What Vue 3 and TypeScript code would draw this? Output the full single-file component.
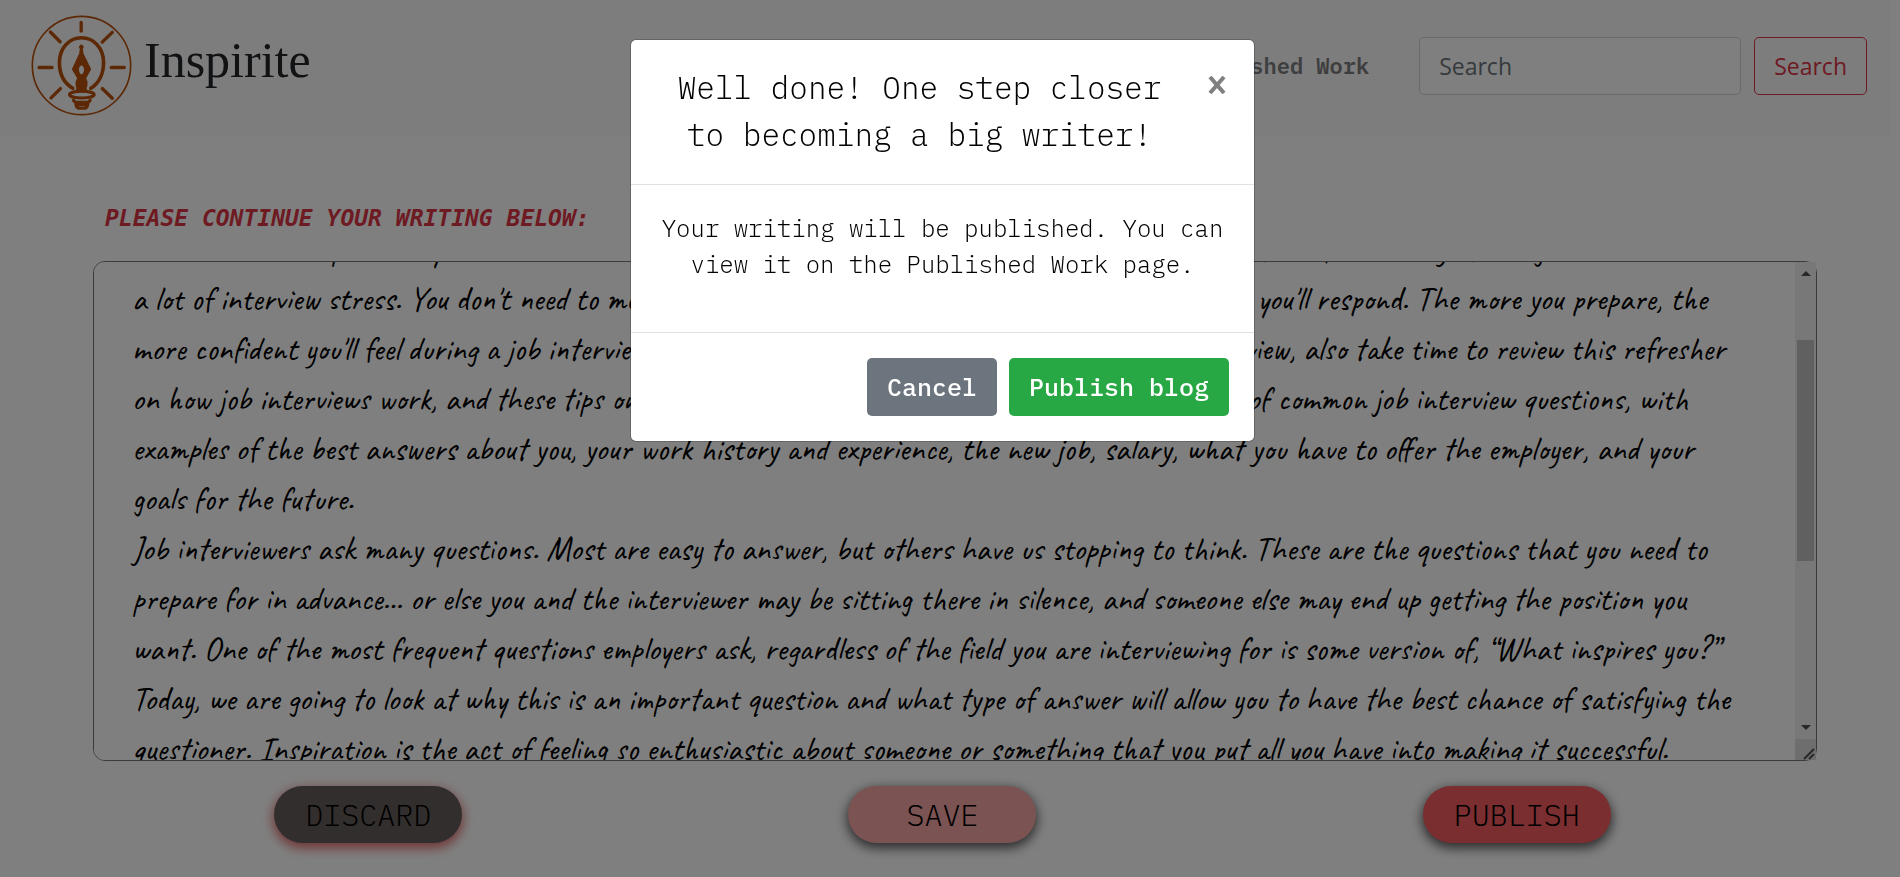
<script setup lang="ts">
import { computed, nextTick, onMounted, ref } from 'vue'

const editor = ref<HTMLTextAreaElement | null>(null)
const query = ref('')
const showDialog = ref(true)

const scrollTop = ref(0)
const scrollHeight = ref(1)
const viewHeight = ref(1)

const thumbStyle = computed(() => ({
  top: `${(scrollTop.value / scrollHeight.value) * 100}%`,
  height: `${(viewHeight.value / scrollHeight.value) * 100}%`,
}))

function syncScroll() {
  const el = editor.value
  if (!el) return
  scrollTop.value = el.scrollTop
  scrollHeight.value = el.scrollHeight
  viewHeight.value = el.clientHeight
}

const draft = ref(
  [
    'Are you ready to ace your upcoming job interview? An important part of interview preparation is being ready to respond to the',
    'with a little more practice you can become more confident at each interview and also learn how to be free of the worry of being in',
    "a lot of interview stress. You don't need to memorize an answer, but do take the time to consider how you'll respond. The more you prepare, the",
    "more confident you'll feel during a job interview. When you're not sure what to expect during an interview, also take time to review this refresher",
    'on how job interviews work, and these tips on how to ace the interview. Then take a look at this list of common job interview questions, with',
    'examples of the best answers about you, your work history and experience, the new job, salary, what you have to offer the employer, and your',
    'goals for the future.',
    'Job interviewers ask many questions. Most are easy to answer, but others have us stopping to think. These are the questions that you need to',
    'prepare for in advance... or else you and the interviewer may be sitting there in silence, and someone else may end up getting the position you',
    'want. One of the most frequent questions employers ask, regardless of the field you are interviewing for is some version of, “What inspires you?”',
    'Today, we are going to look at why this is an important question and what type of answer will allow you to have the best chance of satisfying the',
    'questioner. Inspiration is the act of feeling so enthusiastic about someone or something that you put all you have into making it successful.',
    'Employers ask the question because they want to know what motivates you, and whether the role will keep you interested.',
    'Think about the moments when you felt proud of your work, and the people who helped you to get there.',
    'Choose one example that relates to the position, and explain how it changed the way that you work.',
    'Keep the answer short and honest, and practice it aloud until it sounds natural.',
    'Finish by linking your inspiration to the goals of the company.',
    'Good luck with your next interview!',
  ].join('\n'),
)

onMounted(async () => {
  await nextTick()
  if (editor.value) editor.value.scrollTop = 128
  syncScroll()
})
</script>

<template>
  <div class="page">
    <header class="navbar">
      <a class="brand" href="#">
        <svg class="logo" viewBox="48 30 300 302" fill="none" stroke="#b8510a" stroke-linecap="round" aria-hidden="true">
          <circle cx="198" cy="181" r="147" stroke-width="5" />
          <path
            stroke-width="10"
            d="M197 52V78M105 81L134 110M290 82L260 111M71 187H110M287 187H326M107 278L135 250M260 250L290 279"
          />
          <path stroke-width="11" d="M172 249C146 234 132 205 132 172C132 130 160 98 198 98C236 98 264 130 264 172C264 205 250 234 226 249" />
          <path
            fill="#b8510a"
            fill-rule="evenodd"
            stroke="none"
            d="M193 131A7 7 0 1 1 202 131L204 145L227 192L212 219Q220 234 213 248L217 262H179L183 248Q176 234 185 219L169 192L191 145ZM198 180C188 184 188 202 198 208C208 202 208 184 198 180Z"
          />
          <ellipse cx="199" cy="268" rx="37" ry="10" stroke-width="9" />
          <path stroke-width="9" d="M174 284Q175 291 187 291H211Q223 291 224 284M181 296Q182 309 192 309H206Q216 309 217 296Q199 301 181 296" />
        </svg>
        <span>Inspirite</span>
      </a>
      <nav class="links"><a href="#">Published Work</a></nav>
      <form class="search" role="search" @submit.prevent>
        <input v-model="query" type="search" placeholder="Search" aria-label="Search" />
        <button type="submit">Search</button>
      </form>
    </header>

    <main class="content">
      <label class="prompt" for="draft">PLEASE CONTINUE YOUR WRITING BELOW:</label>
      <div class="editor">
        <textarea id="draft" ref="editor" v-model="draft" wrap="off" spellcheck="false" @scroll="syncScroll"></textarea>
        <div class="scrollbar" aria-hidden="true">
          <svg class="arrow" viewBox="0 0 21 21"><path d="M6 14L11 9L16 14Z" fill="#505050" /></svg>
          <div class="track"><div class="thumb" :style="thumbStyle"></div></div>
          <svg class="arrow" viewBox="0 0 21 21"><path d="M6 7L11 12L16 7Z" fill="#505050" /></svg>
          <svg class="grip" viewBox="0 0 21 21"><path d="M9 20L19 10M14 20L19 15" stroke="#505050" stroke-width="2" /></svg>
        </div>
      </div>
      <div class="actions">
        <div><button class="discard" type="button">DISCARD</button></div>
        <div><button class="save" type="button">SAVE</button></div>
        <div><button class="publish" type="button" @click="showDialog = true">PUBLISH</button></div>
      </div>
    </main>

    <div v-if="showDialog" class="backdrop">
      <section class="dialog" role="dialog" aria-modal="true" aria-labelledby="dialog-title">
        <div class="dialog-head">
          <h2 id="dialog-title">Well done! One step closer to becoming a big writer!</h2>
          <button class="close" type="button" aria-label="Close" @click="showDialog = false">
            <svg viewBox="0 0 18 18" aria-hidden="true"><path d="M2 1L16 17M16 1L2 17" stroke="#7f7f7f" stroke-width="4" /></svg>
          </button>
        </div>
        <div class="dialog-body">
          <p>Your writing will be published. You can view it on the Published Work page.</p>
        </div>
        <div class="dialog-foot">
          <button class="cancel" type="button" @click="showDialog = false">Cancel</button>
          <button class="confirm" type="button">Publish blog</button>
        </div>
      </section>
    </div>
  </div>
</template>

<style>
body {
  margin: 0;
  background: #fff;
}
</style>

<style scoped>
* {
  box-sizing: border-box;
}

.page {
  min-height: 100vh;
  padding-right: 15px;
  font-family: "IBM Plex Mono", "Liberation Mono", monospace;
  color: #000;
}

.navbar {
  display: flex;
  align-items: center;
  height: 136px;
  margin-right: -6px;
  padding: 0 24px 5px 31px;
  background: #fbfbfc;
}

.brand {
  display: flex;
  align-items: center;
  gap: 12px;
  margin-right: auto;
  font: 50px/60px "Liberation Serif", serif;
  color: #212529;
  text-decoration: none;
}

.brand span {
  padding-bottom: 12px;
}

.logo {
  width: 101px;
  height: 101px;
}

.links {
  padding: 0 50px;
  font-size: 22px;
  font-weight: 600;
}

.links a {
  color: #7c7d7d;
  text-decoration: none;
}

.search {
  display: flex;
  align-items: center;
  gap: 13px;
}

.search input,
.search button {
  height: 58px;
  padding: 0 19px;
  border-radius: 5px;
  font: 23px/36px "Open Sans", sans-serif;
}

.search input {
  width: 322px;
  border: 1px solid #ced4da;
  background: #fff;
}

.search input::placeholder {
  color: #6c757d;
  opacity: 1;
}

.search button {
  border: 1px solid #dc3545;
  background: transparent;
  color: #dc3545;
}

.content {
  padding: 0 81px;
}

.prompt {
  display: block;
  padding: 67px 0 28px 24px;
  font: italic 700 23px/30px "DejaVu Sans Mono", monospace;
  color: #dc3545;
}

.editor {
  position: relative;
  height: 500px;
  margin: 0 -13px 0 12px;
}

.editor textarea {
  display: block;
  width: 100%;
  height: 100%;
  padding: 40px 38px;
  overflow-x: hidden;
  overflow-y: scroll;
  resize: none;
  scrollbar-width: none;
  border: 1px solid #767676;
  border-radius: 12px;
  outline: 0;
  background: #fff;
  color: #000;
  font: 33px/50px "Caveat", "Liberation Serif", serif;
}

.scrollbar {
  position: absolute;
  inset: 1px 1px 1px auto;
  display: flex;
  flex-direction: column;
  width: 21px;
  background: #f1f1f1;
  pointer-events: none;
}

.arrow,
.grip {
  flex: none;
  width: 21px;
  height: 21px;
}

.grip {
  background: #dcdcdc;
}

.track {
  position: relative;
  flex: 1;
}

.thumb {
  position: absolute;
  left: 2px;
  right: 2px;
  background: #c1c1c1;
}

.actions {
  display: grid;
  grid-template-columns: repeat(3, 1fr);
  padding: 25px 0 34px;
  text-align: center;
}

.actions button {
  width: 188px;
  height: 57px;
  padding: 0;
  border: 0;
  border-radius: 29px;
  color: #000;
  font: 300 30px/57px "IBM Plex Mono", "Liberation Mono", monospace;
}

.actions .discard {
  background: #665d5c;
  box-shadow: 0 4px 12px 1px #d66;
}

.actions .save {
  background: #f7a6a6;
  box-shadow: 0 4px 12px 1px #555;
}

.actions .publish {
  background: #f65c60;
  box-shadow: 0 4px 12px 1px #555;
}

.backdrop {
  position: fixed;
  inset: 0;
  padding: 39px 15px 40px 0;
  overflow: hidden;
  background: rgba(0, 0, 0, 0.5);
}

.dialog {
  max-width: 625px;
  margin: 0 auto;
  border: 1px solid rgba(0, 0, 0, 0.2);
  border-radius: 6px;
  background: #fff;
  background-clip: padding-box;
}

.dialog-head {
  display: flex;
  align-items: flex-start;
  padding: 24px 22px 26px 24px;
  border-bottom: 1px solid #dee2e6;
}

.dialog-head h2 {
  flex: 1;
  margin: 0;
  font-size: 31px;
  font-weight: 300;
  line-height: 47px;
  text-align: center;
}

.close {
  width: 48px;
  padding: 12px 0 0 24px;
  border: 0;
  background: none;
}

.close svg {
  display: block;
  width: 18px;
  height: 18px;
}

.dialog-body {
  padding: 25px 25px 50px;
}

.dialog-body p {
  margin: 0;
  font-size: 24px;
  font-weight: 300;
  line-height: 36px;
  text-align: center;
}

.dialog-foot {
  display: flex;
  justify-content: flex-end;
  gap: 12px;
  padding: 25px;
  border-top: 1px solid #dee2e6;
}

.dialog-foot button {
  height: 58px;
  padding: 0 20px;
  border: 0;
  border-radius: 5px;
  color: #fff;
  font: 500 25px/36px "IBM Plex Mono", "Liberation Mono", monospace;
}

.dialog-foot .cancel {
  background: #6c757d;
}

.dialog-foot .confirm {
  background: #28a745;
}
</style>
